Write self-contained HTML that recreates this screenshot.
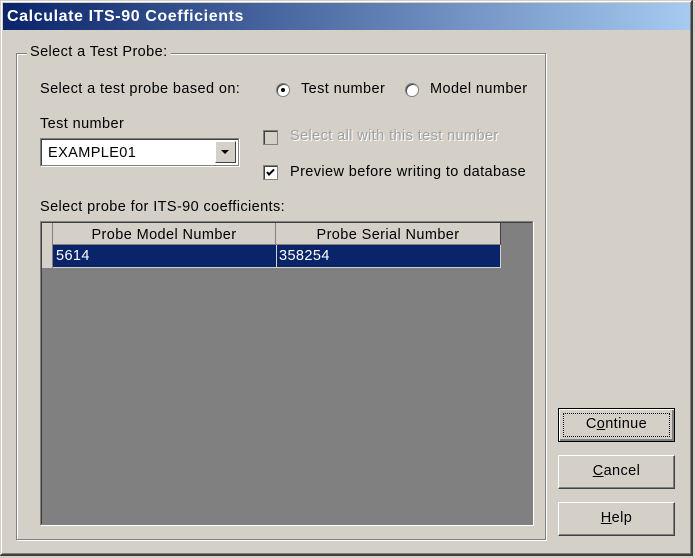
<!DOCTYPE html>
<html><head><style>
body{margin:0;width:695px;height:558px;background:#d4d0c8;font-family:"Liberation Sans",Arial,sans-serif;font-size:14.5px;letter-spacing:0.4px;color:#000;position:relative;overflow:hidden}
.a{position:absolute}
.win{left:0;top:0;width:693px;height:556px;border-top:1px solid #d4d0c8;border-left:1px solid #d4d0c8;border-right:2px solid #404040;border-bottom:2px solid #404040;box-sizing:border-box;box-shadow:inset 1px 1px #fff,inset -1px -1px #808080}
.title{left:3px;top:3px;width:687px;height:27px;background:linear-gradient(90deg,#0a246a,#a6caf0);color:#fff;font-weight:bold;font-size:16px;letter-spacing:0.6px;line-height:27px;padding-left:4px;box-sizing:border-box}
.grp{left:16px;top:53px;width:528px;height:485px;border:1px solid #808080;box-shadow:1px 1px #fff,inset 1px 1px #fff}
.lg{left:27px;top:44px;background:#d4d0c8;padding:0 3px}
.radio{width:12px;height:12px;border-radius:50%;background:#fff;border:1px solid #808080;box-shadow:inset 1px 1px #404040}
.chk{width:13px;height:13px;background:#fff;border:1px solid #808080;box-shadow:inset 1px 1px #404040}
.btn{width:117px;height:34px;background:#d4d0c8;border:1px solid #fff;border-right-color:#404040;border-bottom-color:#404040;box-sizing:border-box;box-shadow:inset -1px -1px #808080;text-align:center;line-height:31px}
</style></head><body>
<div class="a win"></div>
<div class="a title">Calculate ITS-90 Coefficients</div>
<div class="a grp"></div>
<div class="a lg">Select a Test Probe:</div>
<div class="a" style="left:40px;top:81px">Select a test probe based on:</div>
<div class="a radio" style="left:276px;top:83px"><div class="a" style="left:4px;top:4px;width:4px;height:4px;background:#000;border-radius:50%"></div></div>
<div class="a" style="left:301px;top:81px">Test number</div>
<div class="a radio" style="left:405px;top:83px"></div>
<div class="a" style="left:430px;top:81px">Model number</div>
<div class="a" style="left:40px;top:116px">Test number</div>
<div class="a" style="left:40px;top:138px;width:199px;height:28px;background:#fff;border:1px solid #808080;box-sizing:border-box;box-shadow:inset 1px 1px #404040,1px 1px #fff"></div>
<div class="a" style="left:48px;top:145px">EXAMPLE01</div>
<div class="a" style="left:215px;top:141px;width:21px;height:22px;background:#d4d0c8;border:1px solid #fff;border-right-color:#404040;border-bottom-color:#404040;box-sizing:border-box"><div class="a" style="left:5px;top:8px;border-left:4px solid transparent;border-right:4px solid transparent;border-top:4px solid #000"></div></div>
<div class="a chk" style="left:263px;top:130px;background:#d4d0c8"></div>
<div class="a" style="left:290px;top:128px;color:#a0a0a0;text-shadow:1px 1px #fff">Select all with this test number</div>
<div class="a chk" style="left:263px;top:165px"><svg width="13" height="13" class="a" style="left:0;top:0"><path d="M3 6l2 2.5L10 3.5" stroke="#000" stroke-width="2" fill="none"/></svg></div>
<div class="a" style="left:290px;top:164px">Preview before writing to database</div>
<div class="a" style="left:40px;top:199px">Select probe for ITS-90 coefficients:</div>
<div class="a" style="left:40px;top:221px;width:493px;height:304px;background:#808080;border:1px solid #808080;box-sizing:border-box;box-shadow:inset 1px 1px #404040,1px 1px #fff"></div>
<div class="a" style="left:42px;top:223px;width:459px;height:22px;background:#d4d0c8"></div>
<div class="a" style="left:42px;top:223px;width:11px;height:45px;background:#d4d0c8;border-right:1px solid #808080;box-sizing:border-box"></div>
<div class="a" style="left:53px;top:223px;width:223px;height:22px;border-right:1px solid #808080;border-bottom:1px solid #808080;box-sizing:border-box;text-align:center;line-height:24px">Probe Model Number</div>
<div class="a" style="left:276px;top:223px;width:225px;height:22px;border-right:1px solid #404040;border-bottom:1px solid #808080;box-sizing:border-box;text-align:center;line-height:24px">Probe Serial Number</div>
<div class="a" style="left:53px;top:245px;width:448px;height:23px;background:#0a246a;color:#fff;border-bottom:1px solid #d4d0c8;box-sizing:border-box"></div>
<div class="a" style="left:276px;top:245px;width:1px;height:23px;background:#d4d0c8"></div>
<div class="a" style="left:56px;top:248px;color:#fff">5614</div>
<div class="a" style="left:279px;top:248px;color:#fff">358254</div>
<div class="a" style="left:500px;top:245px;width:1px;height:23px;background:#d4d0c8"></div>
<div class="a btn" style="left:558px;top:408px;border:1px solid #000;box-shadow:inset 1px 1px #fff,inset -2px -2px #808080"><span style="position:absolute;left:4px;top:4px;right:4px;bottom:4px;border:1px dotted #000"></span><span style="position:relative">C<u>o</u>ntinue</span></div>
<div class="a btn" style="left:558px;top:455px"><u>C</u>ancel</div>
<div class="a btn" style="left:558px;top:502px"><u>H</u>elp</div>
</body></html>
